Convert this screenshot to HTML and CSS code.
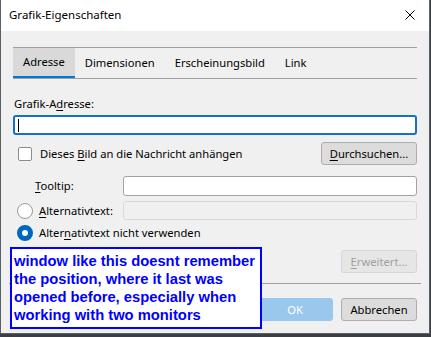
FILE: index.html
```html
<!DOCTYPE html>
<html>
<head>
<meta charset="utf-8">
<link rel="stylesheet" href="styles.css">
</head>
<body>
<div class="window">
  <div class="titlebar">
    <span class="title">Grafik-Eigenschaften</span>
    <svg class="close" width="10" height="10" viewBox="0 0 10 10"><path d="M0.5 0.5 L9.5 9.5 M9.5 0.5 L0.5 9.5" stroke="#000" stroke-width="1" fill="none"/></svg>
  </div>
  <div class="client">
    <div class="tabs">
      <div class="tab active">Adresse</div>
      <div class="tab">Dimensionen</div>
      <div class="tab">Erscheinungsbild</div>
      <div class="tab">Link</div>
    </div>
    <div class="panel">
      <div class="label">Grafik-A<u>d</u>resse:</div>
      <div class="input focus"><span class="caret"></span></div>
      <div class="row attach">
        <div class="check"><span class="box"></span><span>Dieses <u>B</u>ild an die Nachricht anhängen</span></div>
        <div class="btn browse"><u>D</u>urchsuchen...</div>
      </div>
      <div class="alt-grid">
        <div class="tip-label"><u>T</u>ooltip:</div>
        <div class="input tip"></div>
        <div class="radio-label"><span class="radio"></span><span><u>A</u>lternativtext:</span></div>
        <div class="input disabled"></div>
      </div>
      <div class="radio-label checked-row"><span class="radio on"></span><span>Alter<u>n</u>ativtext nicht verwenden</span></div>
      <div class="row end"><div class="btn disabled-btn"><u>E</u>rweitert...</div></div>
    </div>
    <div class="sep"></div>
    <div class="footer">
      <div class="btn ok">OK</div>
      <div class="btn cancel">Abbrechen</div>
    </div>
  </div>
  <div class="note">window like this doesnt remember the position, where it last was opened before, especially when working with two monitors</div>
</div>
</body>
</html>
```
FILE: styles.css
```css
html, body {
  margin: 0;
  padding: 0;
  background: #3b3f44;
  width: 431px;
  height: 337px;
  overflow: hidden;
}
body {
  font-family: "Noto Sans", "Liberation Sans", sans-serif;
  font-size: 11.2px;
  color: #000;
}
u { text-decoration: underline; text-underline-offset: 2px; }
.window {
  position: relative;
  width: 428px;
  height: 333px;
  border: 1px solid #5b6066;
  border-top: none;
  background: #f0f0f0;
  display: flex;
  flex-direction: column;
}
.titlebar {
  height: 31px;
  background: #fff;
  display: flex;
  align-items: center;
  justify-content: space-between;
  padding: 0 14px 0 8px;
  flex: none;
}
.title { line-height: 16px; margin-top: -1px; font-size: 11.5px; }
.close { display: block; margin-top: -1px; }
.client {
  padding: 16px 12px 0 12px;
  display: flex;
  flex-direction: column;
}
.tabs {
  display: flex;
  border-top: 1px solid #a0a0a0;
  border-bottom: 1px solid #a0a0a0;
  height: 30px;
}
.tab {
  padding: 0 10px;
  line-height: 30px;
  height: 30px;
  box-sizing: border-box;
}
.tab.active {
  background: #d9d9d9;
  border-bottom: 2px solid #0078d7;
  line-height: 28px;
}
.panel {
  display: flex;
  flex-direction: column;
}
.label {
  margin-top: 17px;
  line-height: 16px;
  padding-left: 1px;
}
.input {
  box-sizing: border-box;
  height: 20px;
  background: #fff;
  border: 1px solid #a2a2a2;
  border-radius: 3px;
}
.input.focus {
  margin-top: 3px;
  border: 2px solid #1670c7;
  display: flex;
  align-items: center;
  padding-left: 3px;
}
.caret { width: 1px; height: 13px; background: #000; }
.row { display: flex; align-items: center; }
.attach {
  margin-top: 7px;
  justify-content: space-between;
  height: 23px;
}
.check { display: flex; align-items: center; gap: 8px; padding-left: 5px; }
.box {
  width: 14px;
  height: 14px;
  box-sizing: border-box;
  background: #fff;
  border: 1px solid #8c8c8c;
  border-radius: 2px;
}
.btn {
  box-sizing: border-box;
  height: 23px;
  border: 1px solid #adadad;
  border-radius: 3px;
  background: #dcdcdc;
  display: flex;
  align-items: center;
  justify-content: center;
  line-height: 16px;
}
.browse { width: 96px; }
.alt-grid {
  margin-top: 11px;
  display: grid;
  grid-template-columns: 110px 1fr;
  row-gap: 5px;
  align-items: center;
}
.tip-label { padding-left: 22px; line-height: 16px; }
.input.tip { height: 20px; }
.input.disabled {
  height: 19px;
  background: #f0f0f0;
  border-color: #d9d9d9;
}
.radio-label {
  display: flex;
  align-items: center;
  gap: 6px;
  padding-left: 4px;
  line-height: 16px;
}
.radio {
  width: 16px;
  height: 16px;
  box-sizing: border-box;
  border-radius: 50%;
  background: #fff;
  border: 1px solid #9a9a9a;
}
.radio.on {
  border: 5px solid #0067c0;
  background: #fff;
}
.checked-row { margin-top: 5px; }
.end { justify-content: flex-end; margin-top: 9px; }
.disabled-btn {
  width: 76px;
  color: #a0a0a0;
  background: #e6e6e6;
  border-color: #d6d6d6;
}
.sep {
  margin: 10px -4px 0 -4px;
  height: 1px;
  background: #a0a0a0;
}
.footer {
  margin-top: 14px;
  display: flex;
  justify-content: flex-end;
  gap: 8px;
}
.ok {
  width: 76px;
  background: #99c8ec;
  border-color: #99c8ec;
  color: #fff;
}
.cancel { width: 76px; }
.note {
  position: absolute;
  left: 9px;
  top: 247px;
  width: 252px;
  height: 82px;
  box-sizing: border-box;
  border: 2px solid #0000ff;
  background: #fff;
  color: #0000ff;
  font-family: "Liberation Sans", Arial, sans-serif;
  font-weight: bold;
  font-size: 14.75px;
  line-height: 18px;
  padding: 3px 0 0 2px;
}
```
